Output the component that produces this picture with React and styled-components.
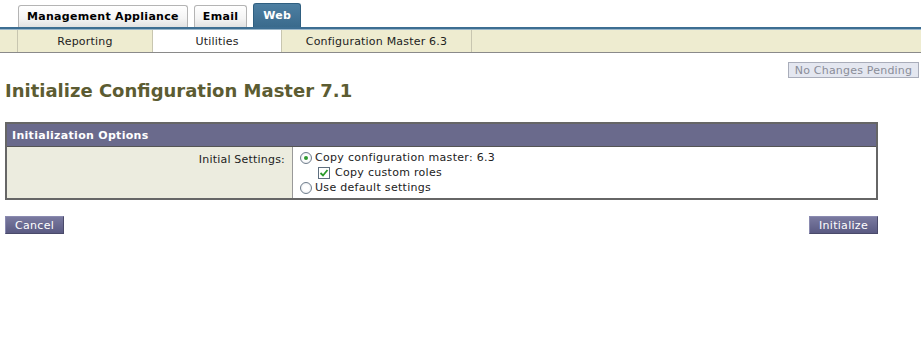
import styled, { createGlobalStyle } from "styled-components";

const GlobalStyle = createGlobalStyle`
  html, body {
    margin: 0;
    padding: 0;
    background: #fff;
    font-family: "DejaVu Sans", Verdana, sans-serif;
    font-size: 11px;
    color: #000;
  }
`;

const TabBar = styled.div`
  display: flex;
  align-items: flex-end;
  gap: 6px;
  height: 27px;
  padding-left: 18px;
`;

const Tab = styled.div`
  height: ${(p) => (p.$active ? "24px" : "22px")};
  box-sizing: border-box;
  padding: 0 ${(p) => (p.$active ? "9px" : "8px")};
  display: flex;
  align-items: center;
  font-weight: bold;
  font-size: 11px;
  letter-spacing: 0.3px;
  border: 1px solid ${(p) => (p.$active ? "#2f5f80" : "#b4b4b4")};
  border-bottom: none;
  border-radius: 3px 3px 0 0;
  color: ${(p) => (p.$active ? "#fff" : "#000")};
  background: ${(p) =>
    p.$active
      ? "linear-gradient(#4d7fa2, #3a6a8c)"
      : "linear-gradient(#ffffff, #f4f4f4 60%, #e2e2e2)"};
`;

const Rule = styled.div`
  height: 3px;
  background: linear-gradient(#3d6e92 0, #3d6e92 2px, #9bb6c9 2px);
`;

const SubNav = styled.div`
  display: flex;
  height: 22px;
  background: #eeecd0;
  border-bottom: 1px solid #8a8a8a;
`;

const SubItem = styled.div`
  width: ${(p) => p.$w}px;
  box-sizing: border-box;
  display: flex;
  align-items: center;
  justify-content: center;
  border-right: 1px solid #c8c6b0;
  background: ${(p) => (p.$active ? "#fff" : "transparent")};
  color: #222;
  letter-spacing: 0.2px;
`;

const StatusRow = styled.div`
  display: flex;
  justify-content: flex-end;
  padding: 9px 2px 0 0;
`;

const PendingButton = styled.div`
  width: 131px;
  height: 16px;
  box-sizing: border-box;
  border: 1px solid #a9adba;
  background: #e4e7f0;
  color: #8a8d98;
  font-size: 11px;
  display: flex;
  align-items: center;
  justify-content: center;
  letter-spacing: 0.2px;
`;

const Title = styled.h1`
  margin: 2px 0 0 5px;
  font-size: 18px;
  font-weight: bold;
  color: #5c5c32;
`;

const Panel = styled.div`
  margin: 21px 43px 0 5px;
  border: 2px solid #666;
`;

const PanelHeader = styled.div`
  height: 22px;
  background: #6a6a8c;
  color: #fff;
  font-weight: bold;
  display: flex;
  align-items: center;
  padding-left: 5px;
  border-bottom: 1px solid #555;
  letter-spacing: 0.3px;
`;

const Row = styled.div`
  display: grid;
  grid-template-columns: 286px 1fr;
  min-height: 51px;
`;

const Label = styled.div`
  background: #ececdf;
  border-right: 1px solid #999;
  text-align: right;
  padding: 6px 7px 0 0;
  color: #222;
  letter-spacing: 0.2px;
`;

const Options = styled.div`
  padding: 4px 0 3px 7px;
  display: flex;
  flex-direction: column;
  gap: 2px;
  color: #222;
`;

const Option = styled.div`
  display: flex;
  align-items: center;
  gap: ${(p) => (p.$indent ? "5px" : "3px")};
  height: 13px;
  padding-left: ${(p) => (p.$indent ? "18px" : "0")};
  letter-spacing: 0.3px;
`;

const RadioMark = styled.span`
  width: 12px;
  height: 12px;
  box-sizing: border-box;
  border-radius: 50%;
  border: 1px solid #6f7d8c;
  background: radial-gradient(#ffffff 40%, #dfe3e8);
  display: inline-flex;
  align-items: center;
  justify-content: center;
  &::after {
    content: "";
    width: 4px;
    height: 4px;
    border-radius: 50%;
    background: ${(p) => (p.$on ? "#2f9a2f" : "transparent")};
  }
`;

const CheckMark = styled.span`
  width: 12px;
  height: 12px;
  box-sizing: border-box;
  border: 1px solid #5f6f7f;
  background: #fff;
  display: inline-flex;
  align-items: center;
  justify-content: center;
`;

const ButtonRow = styled.div`
  display: flex;
  justify-content: space-between;
  margin: 16px 43px 0 5px;
`;

const ActionButton = styled.div`
  height: 18px;
  padding: 0 9px;
  box-sizing: border-box;
  display: flex;
  align-items: center;
  color: #fff;
  background: linear-gradient(#7a7aa0, #5a5a82);
  border: 1px solid #4a4a6a;
  border-top-color: #8a8ab0;
  border-left-color: #8a8ab0;
  letter-spacing: 0.3px;
`;

export default function App() {
  return (
    <>
      <GlobalStyle />
      <TabBar>
        <Tab>Management Appliance</Tab>
        <Tab>Email</Tab>
        <Tab $active>Web</Tab>
      </TabBar>
      <Rule />
      <SubNav>
        <SubItem $w={18} />
        <SubItem $w={135}>Reporting</SubItem>
        <SubItem $w={129} $active>
          Utilities
        </SubItem>
        <SubItem $w={190}>Configuration Master 6.3</SubItem>
      </SubNav>
      <StatusRow>
        <PendingButton>No Changes Pending</PendingButton>
      </StatusRow>
      <Title>Initialize Configuration Master 7.1</Title>
      <Panel>
        <PanelHeader>Initialization Options</PanelHeader>
        <Row>
          <Label>Initial Settings:</Label>
          <Options>
            <Option>
              <RadioMark $on />
              Copy configuration master: 6.3
            </Option>
            <Option $indent>
              <CheckMark>
                <svg width="10" height="10" viewBox="0 0 10 10">
                  <path
                    d="M1.5 5 L4 7.5 L8.5 2"
                    fill="none"
                    stroke="#2a9a2a"
                    strokeWidth="1.8"
                  />
                </svg>
              </CheckMark>
              Copy custom roles
            </Option>
            <Option>
              <RadioMark />
              Use default settings
            </Option>
          </Options>
        </Row>
      </Panel>
      <ButtonRow>
        <ActionButton>Cancel</ActionButton>
        <ActionButton>Initialize</ActionButton>
      </ButtonRow>
    </>
  );
}
